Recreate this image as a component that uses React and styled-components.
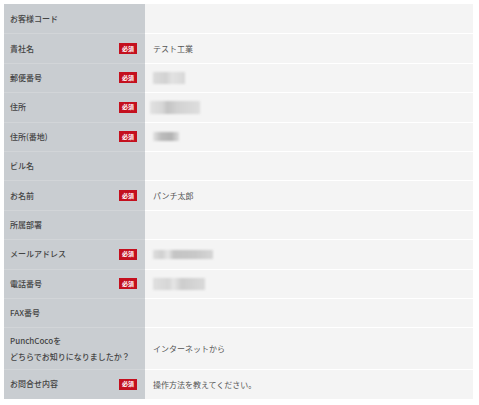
import React from "react";
import styled, { createGlobalStyle } from "styled-components";

const GlobalStyle = createGlobalStyle`
  body {
    margin: 0;
    background: #ffffff;
    font-family: "Noto Sans CJK JP", "Noto Sans", sans-serif;
  }
`;

const Page = styled.div`
  padding: 4px 6px 0 4px;
  width: 479px;
  box-sizing: border-box;
`;

const Table = styled.div`
  display: grid;
  grid-template-columns: 141px 1fr;
  width: 469px;
`;

const Label = styled.div`
  display: flex;
  align-items: center;
  justify-content: space-between;
  height: ${(p) => (p.tall ? "42px" : "29.4px")};
  box-sizing: border-box;
  padding: 0 8px 0 6px;
  background: #c9cdd1;
  border-top: ${(p) => (p.first ? "none" : "1px solid #d2d5d8")};
  color: #444;
  font-size: 8px;
  font-weight: 500;
  line-height: 2;
`;

const Value = styled.div`
  display: flex;
  align-items: center;
  height: ${(p) => (p.tall ? "42px" : "29.4px")};
  box-sizing: border-box;
  padding: 0 8px;
  background: #f4f4f4;
  border-top: ${(p) => (p.first ? "none" : "1px solid #ffffff")};
  color: #555;
  font-size: 8px;
`;

const Badge = styled.span`
  display: inline-flex;
  align-items: center;
  justify-content: center;
  width: 18px;
  height: 11px;
  background: #c4101e;
  color: #fff;
  font-size: 6px;
  font-weight: 700;
  flex-shrink: 0;
`;

const Blur = styled.span`
  display: inline-block;
  width: ${(p) => p.w}px;
  height: ${(p) => p.h}px;
  margin-left: ${(p) => p.off || 0}px;
  background: ${(p) => p.bg};
  filter: blur(1.2px);
`;

const rows = [
  { label: "お客様コード" },
  { label: "貴社名", req: true, value: "テスト工業" },
  { label: "郵便番号", req: true, blur: { w: 32, h: 12, bg: "linear-gradient(90deg,#dcdcdc 0,#d2d2d2 40%,#e2e2e2 60%,#d8d8d8 100%)" } },
  { label: "住所", req: true, blur: { w: 50, h: 13, off: -3, bg: "linear-gradient(90deg,#e2e2e2 0,#d6d6d6 25%,#c4c4c4 35%,#d2d2d2 55%,#dedede 100%)" } },
  { label: "住所(番地)", req: true, blur: { w: 26, h: 9, bg: "linear-gradient(90deg,#e4e4e4 0,#bdbdbd 30%,#b3b3b3 70%,#dcdcdc 100%)" } },
  { label: "ビル名" },
  { label: "お名前", req: true, value: "パンチ太郎" },
  { label: "所属部署" },
  { label: "メールアドレス", req: true, blur: { w: 60, h: 9, bg: "linear-gradient(90deg,#dedede 0,#d0d0d0 15%,#e6e6e6 25%,#c4c4c4 35%,#c8c8c8 70%,#d6d6d6 100%)" } },
  { label: "電話番号", req: true, blur: { w: 52, h: 12, bg: "linear-gradient(90deg,#e0e0e0 0,#d6d6d6 30%,#e6e6e6 40%,#cdcdcd 55%,#dadada 100%)" } },
  { label: "FAX番号" },
  { label: ["PunchCocoを", "どちらでお知りになりましたか？"], tall: true, value: "インターネットから" },
  { label: "お問合せ内容", req: true, value: "操作方法を教えてください。" },
];

const App = () => {
  return (
    <Page>
      <GlobalStyle />
      <Table>
        {rows.map((r, i) => (
          <React.Fragment key={i}>
            <Label first={i === 0} tall={r.tall}>
              <span>
                {Array.isArray(r.label)
                  ? r.label.map((l, j) => <div key={j}>{l}</div>)
                  : r.label}
              </span>
              {r.req && <Badge>必須</Badge>}
            </Label>
            <Value first={i === 0} tall={r.tall}>
              {r.value}
              {r.blur && <Blur {...r.blur} />}
            </Value>
          </React.Fragment>
        ))}
      </Table>
    </Page>
  );
};

export default App;
